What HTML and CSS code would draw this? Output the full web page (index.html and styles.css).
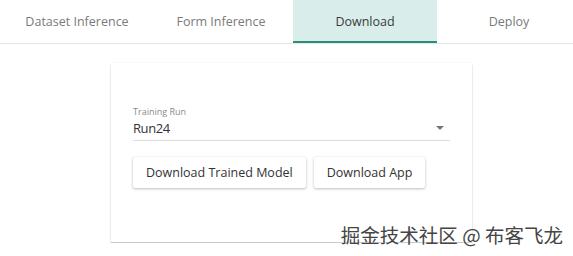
FILE: index.html
```html
<!DOCTYPE html>
<html lang="en">
<head>
    <meta charset="UTF-8">
    <meta name="viewport" content="width=device-width, initial-scale=1.0">
    <title>Download</title>
    <link rel="stylesheet" href="styles.css">
</head>
<body>
    <div class="tabs">
        <div class="tab">Dataset Inference</div>
        <div class="tab">Form Inference</div>
        <div class="tab active">Download</div>
        <div class="tab">Deploy</div>
    </div>

    <div class="page">
        <div class="card">
            <div class="field">
                <label class="field-label">Training Run</label>
                <div class="select">
                    <span class="value">Run24</span>
                    <span class="arrow"></span>
                </div>
            </div>
            <div class="actions">
                <button class="btn">Download Trained Model</button>
                <button class="btn">Download App</button>
            </div>
        </div>
    </div>

    <div class="watermark">掘金技术社区 @ 布客飞龙</div>
</body>
</html>
```

FILE: styles.css
```css
body {
    margin: 0;
    font-family: 'Open Sans', 'Noto Sans', sans-serif;
    background: #fff;
    color: #333;
    overflow: hidden;
}
.tabs {
    display: flex;
    padding-left: 5px;
    height: 43px;
    border-bottom: 1px solid #e6e6e6;
}
.tab {
    flex: 0 0 144px;
    display: flex;
    align-items: center;
    justify-content: center;
    font-size: 12.5px;
    color: #7a7a7a;
    box-sizing: border-box;
}
.tab.active {
    background: #d9eeea;
    color: #3a3a3a;
    border-bottom: 2px solid #2b8c7c;
    padding-top: 2px;
}
.page {
    padding-left: 111px;
    padding-top: 19px;
}
.card {
    width: 361px;
    height: 180px;
    box-sizing: border-box;
    padding: 43px 22px 0;
    background: #fff;
    border-bottom: 1px solid #c8c8c8;
    box-shadow: 0 2px 2px rgba(0, 0, 0, 0.18), 0 0 1px rgba(0, 0, 0, 0.12);
}
.field-label {
    display: block;
    font-size: 9px;
    line-height: 12px;
    color: #8a8a8a;
}
.select {
    display: flex;
    justify-content: space-between;
    align-items: center;
    font-size: 13px;
    line-height: 18px;
    padding: 1px 0 3px;
    border-bottom: 1px solid #dcdcdc;
}
.value {
    letter-spacing: -0.4px;
}
.arrow {
    width: 0;
    height: 0;
    margin-right: 6px;
    border-left: 4px solid transparent;
    border-right: 4px solid transparent;
    border-top: 4px solid #777;
}
.actions {
    display: flex;
    gap: 8px;
    margin-top: 16px;
}
.btn {
    font-family: inherit;
    font-size: 12.5px;
    color: #333;
    background: #fff;
    border: none;
    height: 31px;
    padding: 0 13px;
    border-radius: 2px;
    box-shadow: 0 1px 3px rgba(0, 0, 0, 0.25), 0 0 1px rgba(0, 0, 0, 0.1);
}
.watermark {
    position: absolute;
    right: 10px;
    top: 224px;
    font-family: 'Noto Sans CJK SC', sans-serif;
    font-size: 19.5px;
    line-height: 22px;
    color: #454545;
    text-shadow: 0 0 2px #fff;
}
```
